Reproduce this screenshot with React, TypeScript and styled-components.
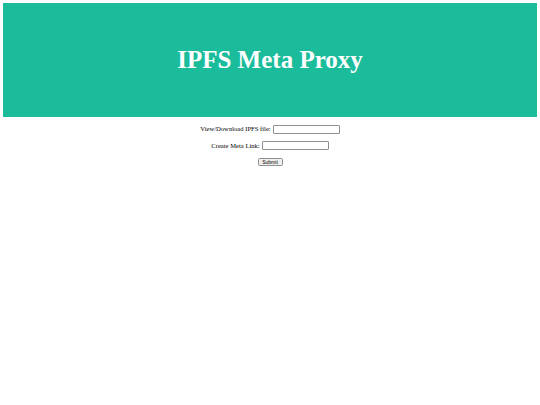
import React from "react";
import styled, { createGlobalStyle } from "styled-components";

const Global = createGlobalStyle`
  html, body { margin: 0; padding: 0; background: #ffffff; }
  body { margin: 3px; font-family: "Liberation Serif", "Times New Roman", serif; }
`;

const Header = styled.header`
  height: 114px;
  background: #1abc9c;
  display: flex;
  align-items: center;
  justify-content: center;
`;

const Title = styled.h1`
  margin: 0;
  font-family: "Liberation Serif", "Times New Roman", serif;
  font-weight: bold;
  font-size: 25px;
  color: #ffffff;
`;

const Form = styled.form`
  margin-top: 7px;
  display: flex;
  flex-direction: column;
  align-items: center;
  gap: 6.5px;
`;

const Row = styled.div`
  display: flex;
  align-items: center;
  gap: 2px;
  height: 10px;
  font-size: 6.6px;
  color: #000000;
`;

const Label = styled.label`
  white-space: nowrap;
  line-height: 10px;
`;

const Input = styled.input`
  box-sizing: border-box;
  width: 67px;
  height: 9px;
  padding: 0;
  margin: 0;
  border: 1px solid #8f8f8f;
  border-radius: 1px;
  background: #ffffff;
  font-size: 6px;
`;

const Button = styled.button`
  box-sizing: border-box;
  width: 25px;
  height: 8px;
  padding: 0;
  margin: 0;
  border: 1px solid #8f8f8f;
  border-radius: 1.5px;
  background: #efefef;
  font-family: "Liberation Sans", Arial, sans-serif;
  font-size: 5px;
  line-height: 6px;
  color: #000000;
`;

export default function App() {
  return (
    <>
      <Global />
      <Header>
        <Title>IPFS Meta Proxy</Title>
      </Header>
      <Form onSubmit={(e) => e.preventDefault()}>
        <Row>
          <Label htmlFor="view">View/Download IPFS file:</Label>
          <Input id="view" type="text" />
        </Row>
        <Row>
          <Label htmlFor="meta">Create Meta Link:</Label>
          <Input id="meta" type="text" />
        </Row>
        <Row>
          <Button type="submit">Submit</Button>
        </Row>
      </Form>
    </>
  );
}
